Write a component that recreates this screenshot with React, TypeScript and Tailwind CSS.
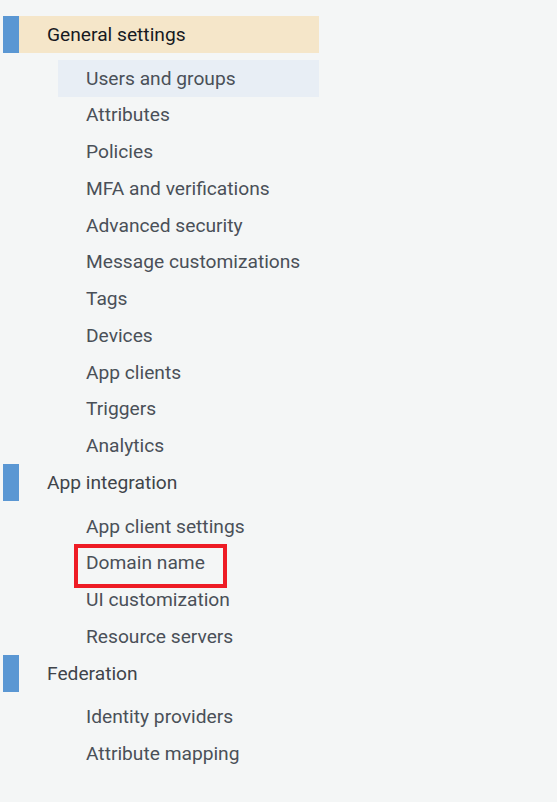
const sections = [
  {
    title: "General settings",
    active: true,
    items: [
      "Users and groups",
      "Attributes",
      "Policies",
      "MFA and verifications",
      "Advanced security",
      "Message customizations",
      "Tags",
      "Devices",
      "App clients",
      "Triggers",
      "Analytics",
    ],
  },
  {
    title: "App integration",
    active: false,
    items: ["App client settings", "Domain name", "UI customization", "Resource servers"],
  },
  {
    title: "Federation",
    active: false,
    items: ["Identity providers", "Attribute mapping"],
  },
];

export default function App() {
  return (
    <div
      className="w-[557px] h-[802px] bg-[#f4f6f6] pt-4 pl-[3px]"
      style={{ fontFamily: "Roboto, 'Liberation Sans', sans-serif" }}
    >
      <div className="w-[316px]">
        {sections.map((section) => (
          <div key={section.title}>
            <div
              className={
                "flex items-center h-[36.75px] " +
                (section.active ? "bg-[#f5e6c9]" : "")
              }
            >
              <div className="w-4 h-full bg-[#5a97d3]" />
              <span
                className={
                  "ml-7 mt-[2px] text-[19.2px] " +
                  (section.active ? "text-[#16191f]" : "text-[#3f444a]")
                }
              >
                {section.title}
              </span>
            </div>
            <div className="pt-[7px]">
              {section.items.map((item) => (
                <div
                  key={item}
                  className={
                    "ml-[55px] h-[36.75px] flex items-center relative " +
                    (item === "Users and groups" ? "bg-[#e8eef5]" : "")
                  }
                >
                  <span className="ml-7 mt-[2px] text-[19.2px] text-[#4a5058]">{item}</span>
                  {item === "Domain name" && (
                    <div className="absolute left-[16px] top-[-1px] w-[153px] h-[44px] border-4 border-[#ee1c25]" />
                  )}
                </div>
              ))}
            </div>
          </div>
        ))}
      </div>
    </div>
  );
}
